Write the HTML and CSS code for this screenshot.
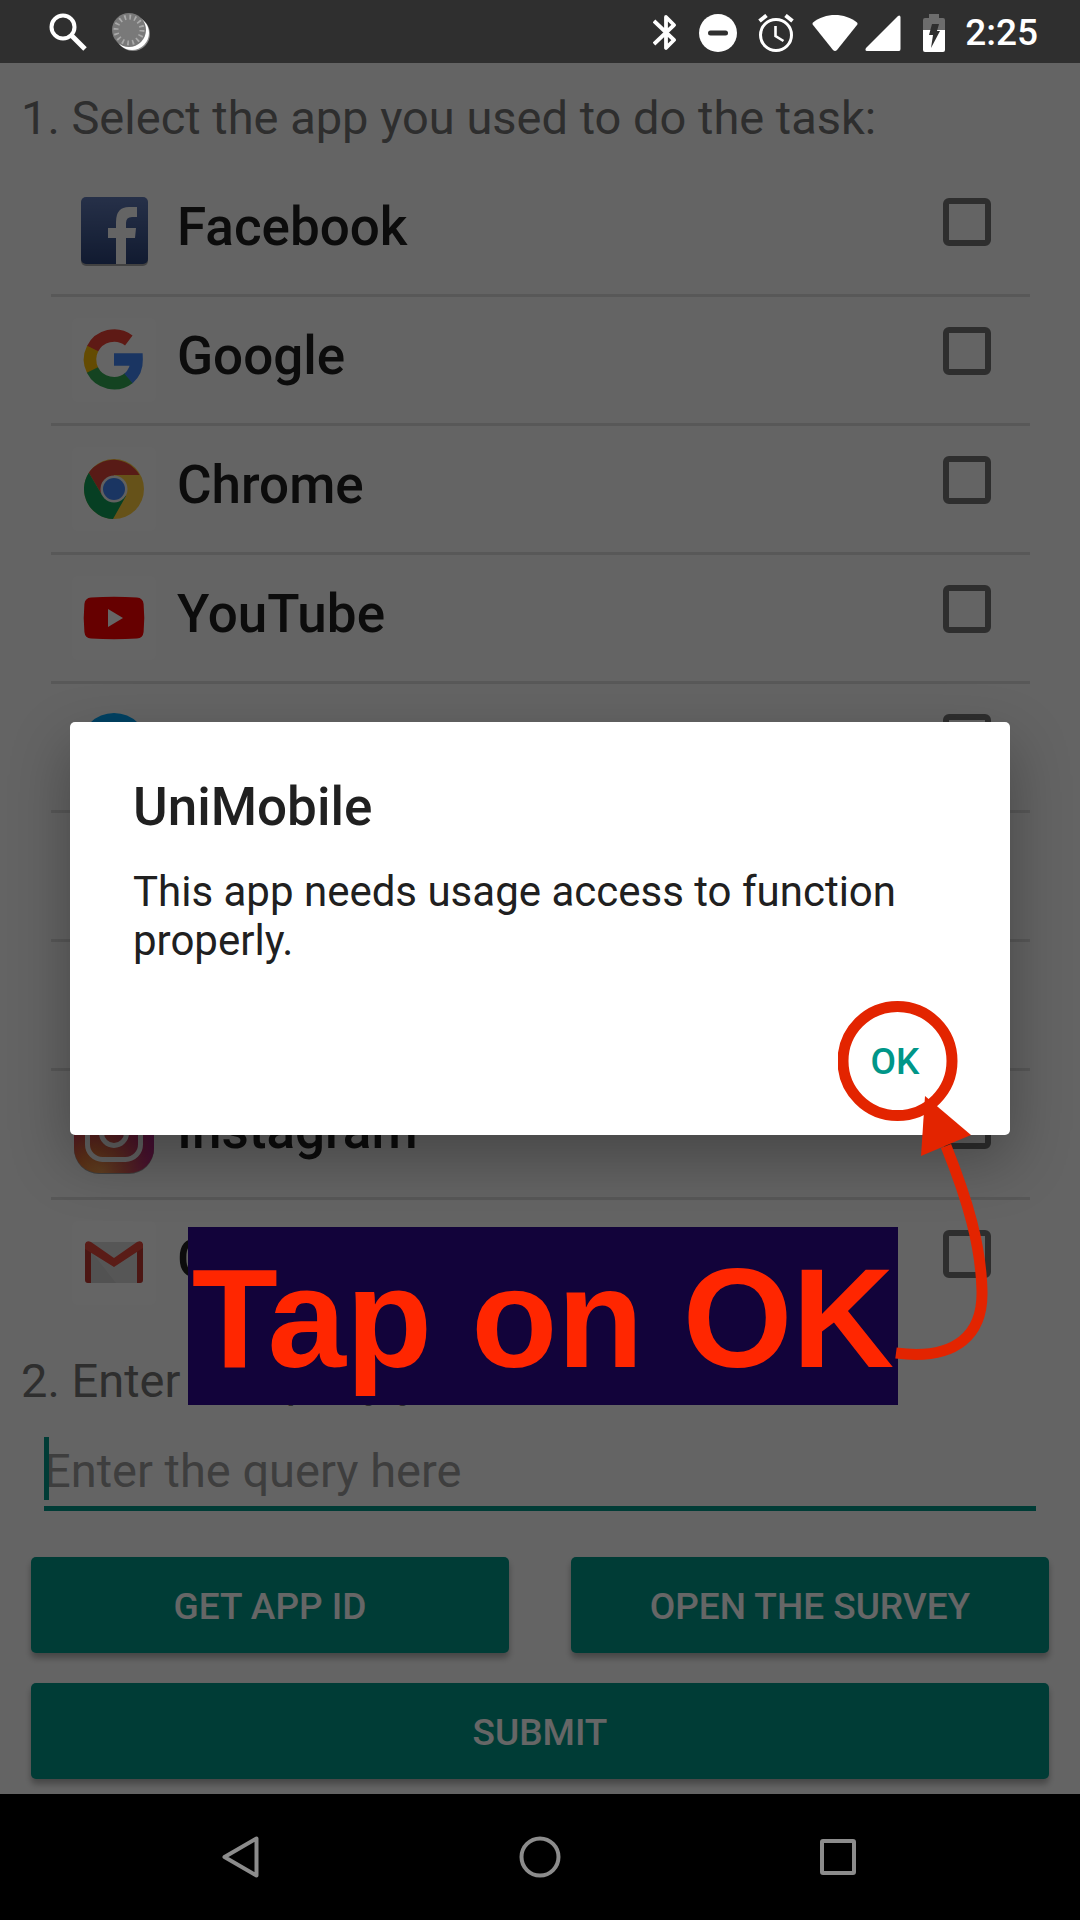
FILE: index.html
```html
<!DOCTYPE html>
<html lang="en">
<head>
<meta charset="utf-8">
<meta name="viewport" content="width=device-width, initial-scale=1">
<title>UniMobile</title>
<link rel="stylesheet" href="styles.css">
</head>
<body>
<div class="screen">
  <header class="status-bar">
    <div class="status-group notifications">
      <svg width="40" height="40" viewBox="0 0 40 40" fill="none" stroke="#fff"><circle cx="14" cy="14" r="11.5" stroke-width="4"/><path d="M23 23L36 36" stroke-width="5"/></svg>
      <svg width="40" height="40" viewBox="0 0 40 40"><circle cx="21" cy="21" r="17" fill="#888"/><circle cx="20" cy="20" r="17" fill="#fff"/><circle cx="17" cy="17" r="17" fill="#797979"/><circle cx="17" cy="17" r="13" fill="none" stroke="#aaa" stroke-width="5" stroke-dasharray="1.7 3.405"/></svg>
    </div>
    <div class="status-group">
      <svg class="bluetooth" width="24" height="40" viewBox="0 0 24 40" fill="none" stroke="#fff" stroke-width="3.8" stroke-linejoin="round"><path d="M1 8L21 27L13 35V4L21 12L1 31"/></svg>
      <svg class="dnd" width="38" height="38" viewBox="0 0 38 38"><circle cx="19" cy="19" r="19" fill="#fff"/><path d="M11.500 19H26.500" stroke="#2f2f2f" stroke-width="5" stroke-linecap="round"/></svg>
      <svg class="alarm" width="36" height="38" viewBox="0 0 36 38" fill="none" stroke="#fff"><circle cx="18" cy="21" r="15.500" stroke-width="3"/><path d="M17.500 12V22L25.500 27" stroke-width="2.600"/><path d="M1.500 7L8.500 1.500M34.500 7L27.500 1.500" stroke-width="4"/></svg>
      <svg class="wifi" width="46" height="38" viewBox="0 0 46 38" fill="#fff"><path d="M1 8.500C13-1.500 33-1.500 45 8.500Q46 9.500 45 11L25 36Q23 38 21 36L1 11Q0 9.500 1 8.500Z"/></svg>
      <svg class="signal" width="36" height="36" viewBox="0 0 36 36" fill="#fff"><path d="M1 33L33 1Q35-.5 35.500 2V34Q35.500 36 34 36H2Q-.5 36 1 33Z"/></svg>
      <svg class="battery" width="22" height="38" viewBox="0 0 22 38"><path d="M6 0H16V4H20Q22 4 22 6V17H0V6Q0 4 2 4H6Z" fill="#6d6d6d"/><path d="M0 16H22V36Q22 38 20 38H2Q0 38 0 36Z" fill="#fff"/><path d="M9 10H16L14 17H17L8 34L10 21H6Z" fill="#2f2f2f"/></svg>
      <time class="clock">2:25</time>
    </div>
  </header>

  <main class="form">
    <h1 class="question">1. Select the app you used to do the task:</h1>
    <ul class="app-list">
      <li class="app-row">
        <svg class="app-icon" viewBox="0 0 84 84"><defs><linearGradient id="fb" x2="0" y2="1"><stop stop-color="#6079b5"/><stop offset="1" stop-color="#2b4379"/></linearGradient></defs><rect x="9" y="10" width="67" height="67" rx="5" fill="#222" opacity=".4"/><rect x="9" y="8" width="67" height="67" rx="5" fill="url(#fb)"/><path d="M44 75V49H36V39H44V33Q44 18 57 18H65V28H60Q54 28 54 34V39H64L63 49H54V75Z" fill="#fafafa"/></svg>
        <label class="app-name" for="app-facebook">Facebook</label>
        <input class="app-check" type="checkbox" id="app-facebook">
      </li>
      <li class="app-row">
        <svg class="app-icon tile" viewBox="0 0 84 84"><g fill="none" stroke-width="12.500"><path d="M56.800 22.500A24.300 24.300 0 0 0 20.400 31" stroke="#ea4335"/><path d="M20.700 30.500A24.300 24.300 0 0 0 20.700 52.500" stroke="#fbbc05"/><path d="M20.400 52A24.300 24.300 0 0 0 57 60" stroke="#34a853"/><path d="M56.500 60.500A24.300 24.300 0 0 0 64.600 41.600H42" stroke="#4285f4"/></g></svg>
        <label class="app-name" for="app-google">Google</label>
        <input class="app-check" type="checkbox" id="app-google">
      </li>
      <li class="app-row">
        <svg class="app-icon tile" viewBox="0 0 84 84"><circle cx="42" cy="42" r="30" fill="#ffcd40"/><path d="M42 42L42 28L67.500 28A30 30 0 0 0 16.800 25.700L30 48Z" fill="#db4437"/><path d="M16.800 25.700A30 30 0 0 0 41 72L54 49L42 42L30 48Z" fill="#0f9d58"/><circle cx="42" cy="42" r="13.500" fill="#f1f1f1"/><circle cx="42" cy="42" r="11" fill="#4285f4"/></svg>
        <label class="app-name" for="app-chrome">Chrome</label>
        <input class="app-check" type="checkbox" id="app-chrome">
      </li>
      <li class="app-row">
        <svg class="app-icon tile" viewBox="0 0 84 84"><path d="M19 21.500Q42 20 65 21.500Q71 22 71.600 28Q73 42 71.600 56Q71 62 65 62.500Q42 64 19 62.500Q13 62 12.400 56Q11 42 12.400 28Q13 22 19 21.500Z" fill="#f00"/><path d="M36 33L51 42L36 51Z" fill="#fff"/></svg>
        <label class="app-name" for="app-youtube">YouTube</label>
        <input class="app-check" type="checkbox" id="app-youtube">
      </li>
      <li class="app-row">
        <svg class="app-icon" viewBox="0 0 84 84"><circle cx="42" cy="42" r="34" fill="#00a3f5"/></svg>
        <span class="app-name"></span>
        <input class="app-check" type="checkbox" aria-label="App 5">
      </li>
      <li class="app-row"></li>
      <li class="app-row"></li>
      <li class="app-row">
        <svg class="app-icon" viewBox="0 0 84 84"><defs><linearGradient id="igSide"><stop stop-color="#fd5949" stop-opacity="0"/><stop offset="1" stop-color="#a01f9b"/></linearGradient><radialGradient id="ig" cx=".35" cy="1" r="1"><stop stop-color="#f3b44c"/><stop offset=".3" stop-color="#e37a3a"/><stop offset=".6" stop-color="#d03a52"/><stop offset="1" stop-color="#b52a86"/></radialGradient></defs><rect x="2" y="3" width="80" height="79" rx="25" fill="#111" opacity=".4"/><rect x="2" y="1" width="80" height="80" rx="25" fill="url(#ig)"/><rect x="2" y="1" width="80" height="80" rx="25" fill="url(#igSide)" opacity=".6"/><rect x="15.500" y="14.500" width="53" height="53" rx="15" fill="none" stroke="#fafafa" stroke-width="5"/><circle cx="42" cy="41" r="12.500" fill="none" stroke="#fafafa" stroke-width="5"/></svg>
        <label class="app-name" for="app-instagram">Instagram</label>
        <input class="app-check" type="checkbox" id="app-instagram">
      </li>
      <li class="app-row">
        <svg class="app-icon tile" viewBox="0 0 84 84"><path d="M15 21H69V62H15Z" fill="#d8d8d8"/><path d="M19 30L44 62H19Z" fill="#cccccc"/><path d="M13 25L19 29V62H16Q13 62 13 59ZM71 25L65 29V62H68Q71 62 71 59Z" fill="#bd3730"/><path d="M13 28V23Q14 19 19 21L42 37L65 21Q70 19 71 23V27L42 46Z" fill="#e0463b"/></svg>
        <label class="app-name" for="app-gmail">Gmail</label>
        <input class="app-check" type="checkbox" id="app-gmail">
      </li>
    </ul>

    <label class="question" for="query">2. Enter the query you used:</label>
    <div class="query-field">
      <input class="query-input" type="text" id="query" placeholder="Enter the query here">
      <span class="caret"></span>
    </div>

    <div class="actions">
      <button class="action" type="button">GET APP ID</button>
      <button class="action" type="button">OPEN THE SURVEY</button>
      <button class="action wide" type="submit">SUBMIT</button>
    </div>
  </main>

  <nav class="nav-bar">
    <button class="nav-button" type="button" aria-label="Back"><svg width="42" height="44" viewBox="0 0 42 44"><path d="M4.500 22L36.500 3.500V40.500Z"/></svg></button>
    <button class="nav-button" type="button" aria-label="Home"><svg width="42" height="44" viewBox="0 0 42 44"><circle cx="21" cy="22" r="18.500"/></svg></button>
    <button class="nav-button" type="button" aria-label="Overview"><svg width="42" height="44" viewBox="0 0 42 44"><rect x="4" y="6" width="32" height="32" rx="1"/></svg></button>
  </nav>

  <div class="scrim">
    <section class="dialog" role="dialog" aria-labelledby="dialog-title">
      <h2 class="dialog-title" id="dialog-title">UniMobile</h2>
      <p class="dialog-text">This app needs usage access to function properly.</p>
      <div class="dialog-actions"><button class="dialog-ok" type="button">OK</button></div>
      <p class="callout">Tap on OK</p>
      <svg class="pointer" width="150" height="360" viewBox="0 0 150 360"><circle cx="59.500" cy="60" r="54.500" fill="none" stroke="#e32400" stroke-width="11"/><path d="M58 352C120 360 145 332 144 290C143 245 130 200 108 145" fill="none" stroke="#e32400" stroke-width="11"/><path d="M87 95L133 134L83 155Z" fill="#e32400"/></svg>
    </section>
  </div>
</div>
</body>
</html>
```
FILE: styles.css
```css
* {
  box-sizing: border-box;
}

body {
  margin: 0;
  background: #fafafa;
  font-family: Roboto, "Noto Sans", sans-serif;
}

.screen {
  position: relative;
  display: flex;
  flex-direction: column;
  min-height: 100vh;
}

/* Status bar */
.status-bar {
  position: relative;
  z-index: 2;
  display: flex;
  justify-content: space-between;
  align-items: center;
  height: 63px;
  padding: 2px 42px 0 49px;
  background: #2f2f2f;
}

.status-group {
  display: flex;
  align-items: center;
  gap: 22px;
}

.notifications {
  gap: 23px;
}

.dnd {
  margin-right: -1px;
}

.wifi {
  margin-left: -4px;
}

.signal {
  margin-left: -15px;
}

.battery {
  margin-right: -2px;
}

.clock {
  color: #fff;
  font-size: 37px;
  font-weight: 500;
  line-height: 42px;
}

/* Form */
.form {
  flex: 1;
  display: flex;
  flex-direction: column;
  padding-top: 27px;
}

.question {
  margin: 0 21px;
  color: #737373;
  font-size: 47px;
  font-weight: 400;
  line-height: 56px;
}

.app-list {
  margin: 22px 50px 24px 51px;
  padding: 0;
  list-style: none;
}

.app-row {
  display: flex;
  align-items: flex-start;
  height: 129px;
  padding: 0 39px 0 21px;
  border-bottom: 3px solid #dcdcdc;
}

.app-row:last-child {
  border-bottom-color: transparent;
}

.app-icon {
  width: 84px;
  height: 84px;
  margin: 21px 21px 0 0;
}

.tile {
  border-radius: 6px;
  background: #fdfdfd;
}

.app-name {
  flex: 1;
  margin-top: 28px;
  color: #202020;
  font-size: 53px;
  font-weight: 500;
  line-height: 63px;
}

.app-check {
  appearance: none;
  width: 48px;
  height: 48px;
  margin: 30px 0 0;
  border: 6px solid #737373;
  border-radius: 6px;
}

.query-field {
  position: relative;
  display: flex;
  margin: 22px 44px 0;
}

.query-input {
  width: 100%;
  padding: 12px 0 7px;
  border: 0;
  border-bottom: 5px solid #009688;
  background: none;
  color: #202020;
  font-family: inherit;
  font-size: 47px;
  line-height: 56px;
}

.query-input::placeholder {
  color: #9b9b9b;
  opacity: 1;
}

.caret {
  position: absolute;
  top: 6px;
  left: 0;
  width: 5px;
  height: 63px;
  background: #009688;
}

.actions {
  display: grid;
  grid-template-columns: 1fr 1fr;
  gap: 30px 62px;
  margin: 46px 31px 15px;
}

.action {
  height: 96px;
  padding: 2px 0 0;
  border: 0;
  border-radius: 5px;
  background: #009688;
  box-shadow: 0 5px 6px rgba(0, 0, 0, 0.3);
  color: #fff;
  font-family: inherit;
  font-size: 37px;
  font-weight: 500;
}

.wide {
  grid-column: 1 / -1;
}

/* Navigation bar */
.nav-bar {
  position: relative;
  z-index: 2;
  display: flex;
  height: 126px;
  padding: 0 92px;
  background: #000;
}

.nav-button {
  flex: 1;
  display: flex;
  justify-content: center;
  align-items: center;
  padding: 0;
  border: 0;
  background: none;
}

.nav-button svg {
  fill: none;
  stroke: #8c8c8c;
  stroke-width: 4;
  stroke-linejoin: round;
}

/* Dialog */
.scrim {
  position: absolute;
  inset: 0;
  z-index: 1;
  display: flex;
  justify-content: center;
  align-items: center;
  padding: 63px 70px 126px;
  background: rgba(0, 0, 0, 0.6);
}

.dialog {
  position: relative;
  width: 100%;
  padding: 54px 63px 28px;
  border-radius: 5px;
  background: #fff;
  box-shadow: 0 24px 60px rgba(0, 0, 0, 0.3);
}

.dialog-title {
  margin: 0 0 28px;
  color: #202020;
  font-size: 53px;
  font-weight: 500;
  line-height: 63px;
}

.dialog-text {
  margin: 0 0 50px;
  color: #202020;
  font-size: 42px;
  line-height: 49px;
}

.dialog-actions {
  display: flex;
  justify-content: flex-end;
}

.dialog-ok {
  width: 104px;
  height: 92px;
  padding: 0;
  border: 0;
  background: none;
  color: #009688;
  font-family: inherit;
  font-size: 37px;
  font-weight: 500;
}

/* Tutorial annotation */
.callout {
  position: absolute;
  top: 505px;
  left: 118px;
  width: 710px;
  height: 178px;
  margin: 0;
  background: #12033a;
  color: #ff2600;
  font-family: "Liberation Sans", Arial, sans-serif;
  font-size: 141px;
  font-weight: 700;
  line-height: 182px;
  text-align: center;
  white-space: nowrap;
}

.pointer {
  position: absolute;
  top: 279px;
  right: 22px;
}
```
